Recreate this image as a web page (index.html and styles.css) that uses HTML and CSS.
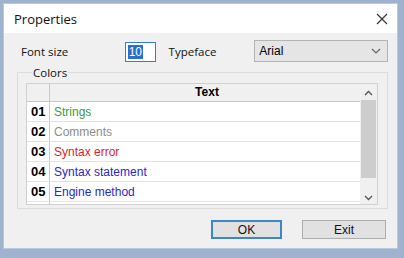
FILE: index.html
```html
<!DOCTYPE html>
<html lang="en">
<head>
    <meta charset="UTF-8">
    <title>Properties</title>
    <link rel="stylesheet" href="styles.css">
</head>
<body>
    <div class="dialog">
        <header class="titlebar">
            <span class="title">Properties</span>
            <svg class="close" width="12" height="12" viewBox="0 0 12 12">
                <path d="M1 1L11 11M11 1L1 11" stroke="#333" stroke-width="1.2" fill="none"/>
            </svg>
        </header>
        <main class="content">
            <div class="font-row">
                <span class="label size-label">Font size</span>
                <div class="size-input"><span class="sel">10</span></div>
                <span class="label face-label">Typeface</span>
                <div class="combo">
                    <span>Arial</span>
                    <svg width="10" height="6" viewBox="0 0 10 6"><path d="M1 1L5 5L9 1" stroke="#666" stroke-width="1.2" fill="none"/></svg>
                </div>
            </div>
            <fieldset class="colors">
                <legend>Colors</legend>
                <div class="grid-wrap">
                    <div class="grid">
                        <div class="row head">
                            <div class="num"></div>
                            <div class="txt">Text</div>
                        </div>
                        <div class="row"><div class="num">01</div><div class="txt green">Strings</div></div>
                        <div class="row"><div class="num">02</div><div class="txt gray">Comments</div></div>
                        <div class="row"><div class="num">03</div><div class="txt red">Syntax error</div></div>
                        <div class="row"><div class="num">04</div><div class="txt blue">Syntax statement</div></div>
                        <div class="row"><div class="num">05</div><div class="txt blue">Engine method</div></div>
                        <div class="row"><div class="num">06</div><div class="txt blue">User functions</div></div>
                    </div>
                    <div class="scrollbar">
                        <svg class="arrow" width="9" height="6" viewBox="0 0 9 6"><path d="M1 5L4.5 1.5L8 5" stroke="#555" stroke-width="1.3" fill="none"/></svg>
                        <div class="thumb"></div>
                        <svg class="arrow" width="9" height="6" viewBox="0 0 9 6"><path d="M1 1L4.5 4.5L8 1" stroke="#555" stroke-width="1.3" fill="none"/></svg>
                    </div>
                </div>
            </fieldset>
            <footer class="buttons">
                <button class="btn ok">OK</button>
                <button class="btn">Exit</button>
            </footer>
        </main>
    </div>
</body>
</html>
```

FILE: styles.css
```css
*{
    margin:0;
    padding:0;
    box-sizing: border-box;
}
body{
    width:404px;
    height:258px;
    background:#9fb3cf;
    padding:3px 6px 9px 3px;
    font-family:'Liberation Sans', Arial, sans-serif;
    font-size:12px;
    color:#000;
}
.dialog{
    width:395px;
    height:246px;
    display:flex;
    flex-direction:column;
    background:#f0f0f0;
    border:1px solid #b9c8dc;
}
.titlebar{
    height:29px;
    background:#fff;
    display:flex;
    align-items:center;
    justify-content:space-between;
    padding:0 9px 0 10px;
}
.title{
    font-family:'Open Sans', sans-serif;
    font-size:13px;
    color:#111;
}
.content{
    flex:1;
    display:flex;
    flex-direction:column;
    padding:7px 9px 0 13px;
}
.font-row{
    display:flex;
    align-items:center;
    height:22px;
}
.label{
    font-family:'Open Sans', sans-serif;
    font-size:11.5px;
    color:#111;
}
.size-label{
    margin-left:4px;
    width:104px;
}
.size-input{
    width:31px;
    height:20px;
    margin-top:2px;
    background:#fff;
    border:1px solid #2f7fd8;
    padding:2px 0 0 2px;
    font-size:12px;
}
.sel{
    background:#2a6fd0;
    color:#fff;
    padding:0 1px;
}
.face-label{
    margin-left:13px;
    width:86px;
}
.combo{
    width:134px;
    height:22px;
    background:#e5e5e5;
    border:1px solid #b4b4b4;
    display:flex;
    align-items:center;
    justify-content:space-between;
    padding:0 6px 0 4px;
}
.colors{
    margin-top:3px;
    height:144px;
    border:1px solid #dcdcdc;
    padding:3px 9px 7px 8px;
}
.colors legend{
    margin-left:6px;
    padding:0 1px;
    font-family:'Open Sans', sans-serif;
    font-size:11.5px;
    color:#111;
}
.grid-wrap{
    display:flex;
    height:122px;
    border:1px solid #d0d0d0;
    background:#fff;
}
.grid{
    flex:1;
    overflow:hidden;
}
.row{
    display:flex;
    height:20px;
    border-bottom:1px solid #e3e3e3;
}
.row.head{
    height:18px;
    background:#f0f0f0;
    border-bottom:1px solid #c8c8c8;
}
.num{
    width:23px;
    border-right:1px solid #c8c8c8;
    font-weight:700;
    font-size:13px;
    padding:2px 0 0 4px;
}
.head .num{
    background:#f0f0f0;
}
.txt{
    flex:1;
    padding:3px 0 0 4px;
    font-size:12px;
}
.head .txt{
    text-align:center;
    font-weight:700;
    padding-top:1px;
}
.green{ color:#3c9a3c; }
.gray{ color:#8c8c8c; }
.red{ color:#d62828; }
.blue{ color:#2828c8; }
.scrollbar{
    width:17px;
    background:#f0f0f0;
    display:flex;
    flex-direction:column;
    align-items:center;
    padding-top:6px;
}
.thumb{
    width:15px;
    height:78px;
    margin:4px 0 17px;
    background:#cdcdcd;
}
.buttons{
    display:flex;
    justify-content:flex-end;
    gap:20px;
    margin-top:11px;
    padding-right:2px;
}
.btn{
    width:84px;
    height:19px;
    background:#e1e1e1;
    border:1px solid #adadad;
    font-family:'Liberation Sans', Arial, sans-serif;
    font-size:12px;
    color:#111;
}
.btn.ok{
    width:71px;
    border:2px solid #3d86c8;
}
```
